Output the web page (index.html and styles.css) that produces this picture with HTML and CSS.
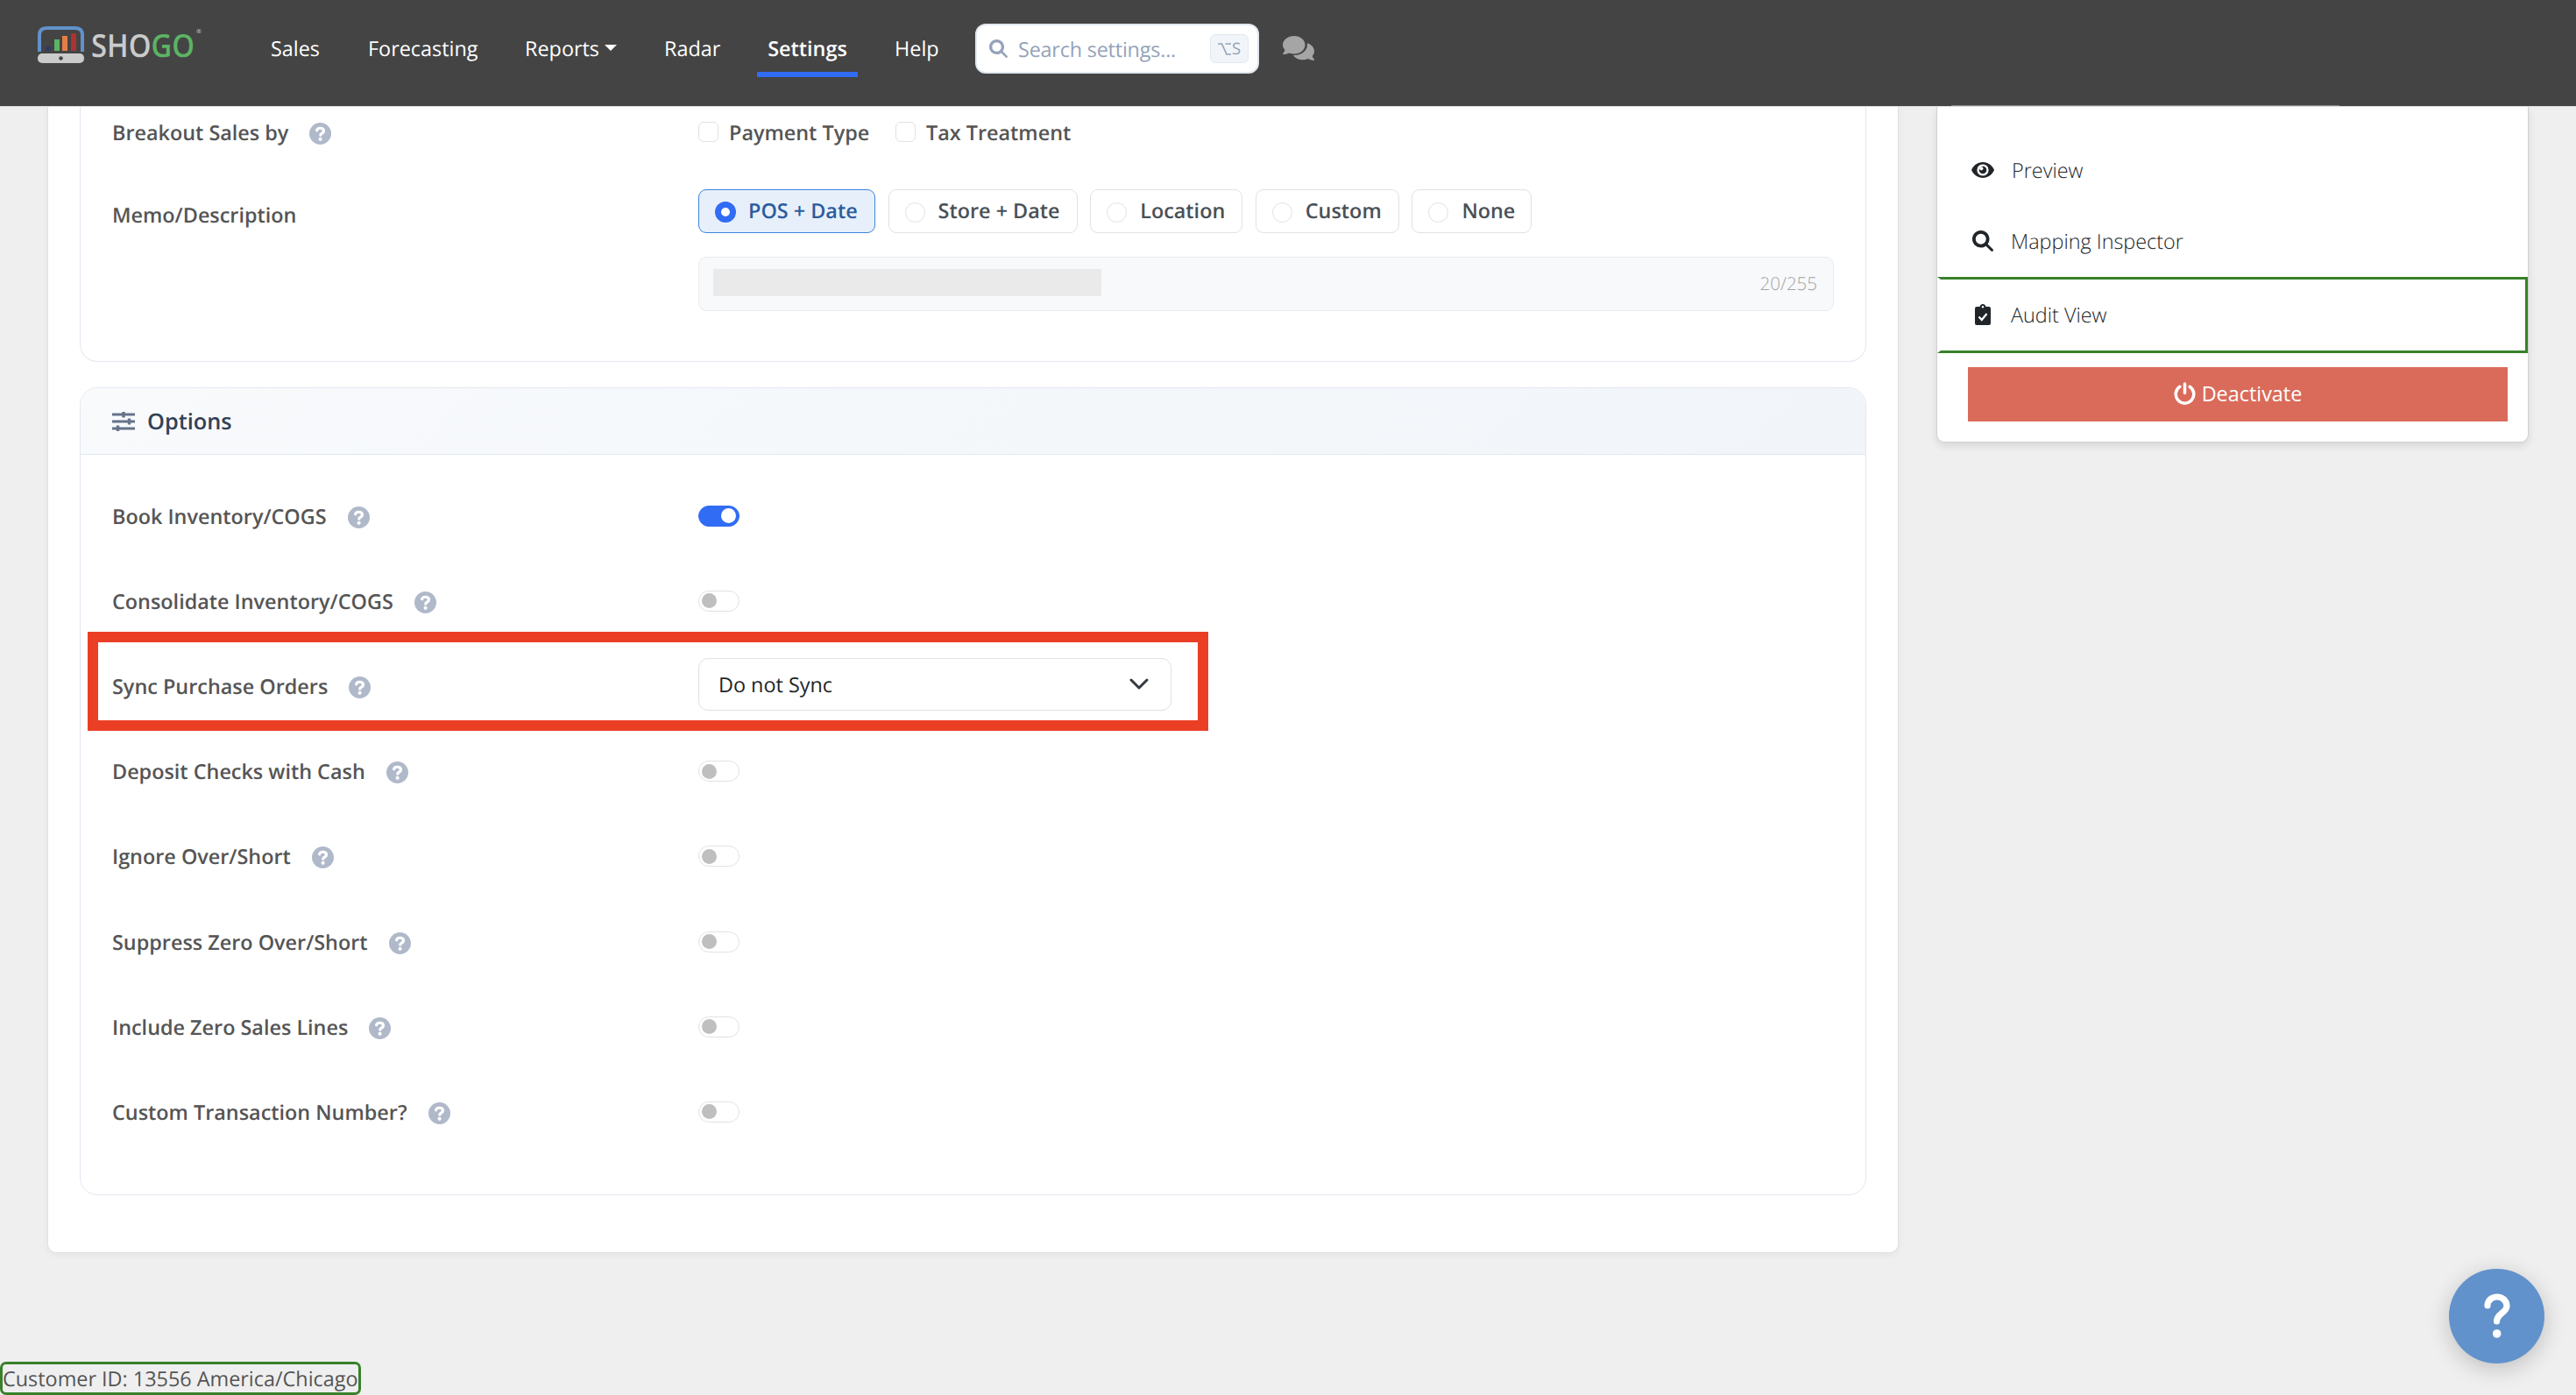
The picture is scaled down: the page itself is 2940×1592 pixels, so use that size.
FILE: index.html
```
<!DOCTYPE html>
<html lang="en">
<head>
    <meta charset="UTF-8">
    <meta name="viewport" content="width=device-width, initial-scale=1.0">
    <title>Shogo - Settings</title>
    <link rel="stylesheet" href="styles.css">
</head>
<body>

<!-- icons used more than once -->
<svg class="sprite">
    <symbol id="i-help" viewBox="0 0 512 512">
        <circle cx="256" cy="256" r="256" fill="#b0b9ca"/>
        <path d="M176 180c8-36 36-52 78-52 50 0 84 26 84 64 0 58-76 52-76 98" fill="none" stroke="#fff" stroke-width="66" stroke-linecap="round"/>
        <circle cx="258" cy="386" r="42" fill="#fff"/>
    </symbol>
    <symbol id="i-search" viewBox="0 0 512 512">
        <path fill="currentColor" d="M416 208c0 45.900-14.900 88.300-40 122.700L502.600 457.400c12.500 12.500 12.500 32.800 0 45.300s-32.800 12.500-45.300 0L330.700 376c-34.400 25.200-76.800 40-122.700 40C93.100 416 0 322.900 0 208S93.100 0 208 0S416 93.100 416 208zM208 336a128 128 0 1 0 0-256 128 128 0 1 0 0 256z"/>
    </symbol>
</svg>

<header class="navbar">
    <a class="logo">
        <svg width="53" height="42" viewBox="0 0 53 42">
            <path d="M2 29V10Q2 2 10 2H43Q51 2 51 10V29" fill="none" stroke="#6192cb" stroke-width="4"/>
            <rect x="9" y="23" width="6" height="5" fill="#2f3a63"/>
            <rect x="19" y="15" width="6" height="13" fill="#5cb364"/>
            <rect x="28" y="11" width="6" height="17" fill="#e67e45"/>
            <rect x="38" y="8" width="6" height="20" fill="#a93432"/>
            <rect x="0" y="31" width="53" height="11" rx="5" fill="#cbcbcb"/>
            <circle cx="26.500" cy="36.500" r="2.300" fill="#444"/>
        </svg>
        <span class="logo_text">SHO<b>GO</b></span><sup>®</sup>
    </a>
    <nav class="menu">
        <a class="n_sales">Sales</a>
        <a class="n_fore">Forecasting</a>
        <a class="n_rep">Reports<i class="caret"></i></a>
        <a class="n_radar">Radar</a>
        <a class="active">Settings</a>
        <a class="n_help">Help</a>
    </nav>
    <div class="search">
        <svg width="21" height="21"><use href="#i-search"/></svg>
        <span>Search settings...</span>
        <kbd><svg width="15" height="14" viewBox="0 0 15 14" fill="none" stroke="currentColor" stroke-width="1.700"><path d="M0 1H4.500L10 13H15M8.500 1H15"/></svg>S</kbd>
    </div>
    <svg class="chat" width="36" height="28" viewBox="0 0 36 28">
        <path fill="#a5a5a5" d="M13 0C20 0 25.500 4.500 25.500 10.300S20 20.500 13 20.500c-2 0-4-.4-5.700-1.100C5.500 20.300 3 21.200.5 21c-.5 0-.7-.7-.3-1.100 1-1 1.900-2.500 2.300-4C.9 14.200 0 12.300 0 10.300 0 4.500 6 0 13 0z"/>
        <path fill="#a5a5a5" d="M28 8.200c4.700 1.300 8 5 8 9.300 0 2-.8 4-2.300 5.600.4 1.500 1.200 2.700 2.200 3.700.4.500.1 1.200-.4 1.200-2.400 0-4.800-.9-6.500-1.900-1.800.8-3.800 1.200-6 1.200-4.800 0-9-2.200-11-5.400 9 .6 16-4.700 16-11.600 0-.7 0-1.400 0-2.100z"/>
    </svg>
    <div class="peek"></div>
</header>

<div class="page">
    <main class="panel">
        <section class="card card_top">
            <div class="row row_breakout">
                <div class="label">Breakout Sales by <svg class="help"><use href="#i-help"/></svg></div>
                <div class="checks">
                    <i class="check"></i><span class="pay">Payment Type</span>
                    <i class="check"></i><span>Tax Treatment</span>
                </div>
            </div>
            <div class="row row_memo">
                <div class="label">Memo/Description</div>
                <div class="memo">
                    <div class="chips">
                        <div class="chip on c1"><i></i>POS + Date</div>
                        <div class="chip c2"><i></i>Store + Date</div>
                        <div class="chip c3"><i></i>Location</div>
                        <div class="chip c4"><i></i>Custom</div>
                        <div class="chip c5"><i></i>None</div>
                    </div>
                    <div class="field"><div class="redacted"></div><span>20/255</span></div>
                </div>
            </div>
        </section>

        <section class="card card_options">
            <h2>
                <svg width="26" height="22" viewBox="0 0 26 22" stroke="#667389" fill="none"><path d="M0 3H26M0 11H26M0 19H26" stroke-width="3"/><path d="M13 0V6.500M19.500 7.500V14.500M6.500 15.500V22" stroke-width="3.400"/></svg>
                Options
            </h2>
            <div class="options">
                <div class="row"><div class="label">Book Inventory/COGS <svg class="help"><use href="#i-help"/></svg></div><i class="toggle on"></i></div>
                <div class="row"><div class="label">Consolidate Inventory/COGS <svg class="help"><use href="#i-help"/></svg></div><i class="toggle"></i></div>
                <div class="row"><div class="label">Sync Purchase Orders <svg class="help"><use href="#i-help"/></svg></div>
                    <div class="select">Do not Sync
                        <svg width="22" height="13" viewBox="0 0 22 13"><path d="M2 2L11 11L20 2" fill="none" stroke="#343a40" stroke-width="3" stroke-linecap="round" stroke-linejoin="round"/></svg>
                    </div>
                    <div class="highlight"></div>
                </div>
                <div class="row"><div class="label">Deposit Checks with Cash <svg class="help"><use href="#i-help"/></svg></div><i class="toggle"></i></div>
                <div class="row"><div class="label">Ignore Over/Short <svg class="help"><use href="#i-help"/></svg></div><i class="toggle"></i></div>
                <div class="row"><div class="label">Suppress Zero Over/Short <svg class="help"><use href="#i-help"/></svg></div><i class="toggle"></i></div>
                <div class="row"><div class="label">Include Zero Sales Lines <svg class="help"><use href="#i-help"/></svg></div><i class="toggle"></i></div>
                <div class="row"><div class="label">Custom Transaction Number? <svg class="help"><use href="#i-help"/></svg></div><i class="toggle"></i></div>
            </div>
        </section>
    </main>

    <aside class="side">
        <a class="item preview">
            <svg width="26" height="18" viewBox="0 0 26 18"><path fill="#212529" d="M13 0C19 0 23.500 3.700 26 9 23.500 14.300 19 18 13 18S2.500 14.300 0 9C2.500 3.700 7 0 13 0z"/><circle cx="13" cy="9" r="6.600" fill="#fff"/><circle cx="13" cy="9" r="4.300" fill="#212529"/><circle cx="11.300" cy="7.300" r="2.100" fill="#fff"/></svg>
            Preview
        </a>
        <a class="item mapping">
            <svg width="24" height="24"><use href="#i-search"/></svg>
            Mapping Inspector
        </a>
        <a class="item audit">
            <svg width="18" height="24" viewBox="0 0 18 24"><path fill="#212529" d="M5.500 3C6 1.200 7.300 0 9 0s3 1.200 3.500 3H16q2 0 2 2.200V22q0 2-2 2H2q-2 0-2-2V5.200Q0 3 2 3z"/><circle cx="9" cy="3.300" r="1.200" fill="#fff"/><path d="M4.500 14.500L7.800 18L13.500 11" fill="none" stroke="#fff" stroke-width="2.200"/></svg>
            Audit View
        </a>
        <button class="deactivate">
            <svg width="25" height="26" viewBox="0 0 25 26" fill="none" stroke="#fff" stroke-width="3.500" stroke-linecap="round"><path d="M12.500 2V12.500M6.800 5.300A10.300 10.300 0 1 0 18.200 5.300"/></svg>
            Deactivate
        </button>
    </aside>
</div>

<div class="customer">Customer ID: 13556 America/Chicago</div>

<div class="help_button">
    <svg width="32" height="52" viewBox="0 0 32 52"><path d="M5 14C5 8 10 4 16 4C22 4 27 8.500 27 14.500C27 22 15.500 23 15.500 32" fill="none" stroke="#fff" stroke-width="7.200" stroke-linecap="round"/><circle cx="15.700" cy="46" r="4.800" fill="#fff"/></svg>
</div>

</body>
</html>
```
FILE: styles.css
```
* {
    box-sizing: border-box;
}

body {
    margin: 0;
    height: 1592px;
    overflow: hidden;
    background: #efefef;
    color: #555;
    font-family: "Open Sans", "Noto Sans", sans-serif;
    font-size: 23.4px;
    line-height: 34px;
    text-rendering: geometricPrecision;
}

svg {
    flex: none;
}

.sprite {
    position: absolute;
    width: 0;
    height: 0;
}

/* Top bar */
.navbar {
    position: relative;
    display: flex;
    align-items: flex-start;
    height: 122px;
    padding-left: 43px;
    background: #444;
    border-bottom: 1px solid #dcdcdc;
    color: #fff;
}

.logo {
    display: flex;
    width: 266px;
    padding-top: 30px;
    color: #cbcbcb;
}

.logo_text {
    width: 120px;
    margin: 5px 0 0 8px;
    font-size: 36px;
    font-weight: 600;
    transform: scaleX(.91);
    transform-origin: left;
}

.logo_text b {
    font-weight: 600;
    color: #5cb364;
}

.logo sup {
    margin-top: 2px;
    font-size: 7px;
    line-height: 10px;
}

.menu {
    display: flex;
    padding-top: 38px;
    width: 804px;
}

.menu a {
    flex: none;
    white-space: nowrap;
    height: 50px;
}

.n_sales { width: 111px; }
.n_fore { width: 179px; }
.n_rep { width: 159px; }
.n_radar { width: 106px; }

.menu .active {
    width: 115px;
    text-align: center;
    font-weight: 600;
    border-bottom: 6px solid #316cf4;
    border-radius: 4px 4px 0 0;
}

.n_help {
    margin-left: 42px;
}

.caret {
    display: inline-block;
    margin-left: 6px;
    vertical-align: 6px;
    border: 7px solid transparent;
    border-top-color: #fff;
    border-bottom: 0;
}

.search {
    display: flex;
    align-items: center;
    width: 324px;
    height: 57px;
    margin-top: 27px;
    padding: 0 10px 0 14px;
    background: #fff;
    border: 2px solid #e2e8f0;
    border-radius: 12px;
    color: #94a3b8;
}

.search span {
    flex: 1;
    margin-left: 12px;
    letter-spacing: -.2px;
    white-space: nowrap;
}

.search kbd {
    display: flex;
    align-items: center;
    justify-content: center;
    gap: 1px;
    width: 44px;
    height: 33px;
    font: 18.5px "Open Sans", sans-serif;
    background: #f1f5f9;
    border: 1px solid #e2e8f0;
    border-radius: 6px;
}

.chat {
    margin: 41px 0 0 27px;
}

/* edge of the side panel showing over the bar */
.peek {
    position: absolute;
    left: 2227px;
    top: 120px;
    width: 443px;
    height: 1px;
    background: #888;
}

/* Page */
.page {
    display: flex;
    align-items: flex-start;
    gap: 43px;
    padding-left: 54px;
}

.panel {
    width: 2113px;
    height: 1308px;
    padding: 0 37px;
    background: #fff;
    border: 1px solid #dee2e6;
    border-top: 0;
    border-radius: 0 0 10px 10px;
    box-shadow: 0 2px 8px rgba(0, 0, 0, .05);
}

.card {
    border: 1px solid #e2e8f0;
    border-radius: 20px;
    width: 2039px;
    margin-left: -1px;
}

.card_top {
    height: 291px;
    border-top: 0;
    border-radius: 0 0 20px 20px;
    padding-left: 36px;
}

.row {
    position: relative;
    display: flex;
    align-items: center;
}

.label {
    display: flex;
    align-items: center;
    width: 669px;
    font-weight: 600;
    white-space: nowrap;
}

.help {
    width: 25px;
    height: 25px;
    margin: 3px 0 0 24px;
}

.row_breakout {
    height: 57px;
}

.checks {
    display: flex;
    align-items: center;
    font-weight: 600;
}

.check {
    width: 23px;
    height: 23px;
    margin-right: 12px;
    border: 1px solid #dee2e6;
    border-radius: 6px;
}

.pay {
    width: 190px;
}

.row_memo {
    align-items: flex-start;
    padding-top: 37px;
}

.row_memo .label {
    padding-top: 12px;
}

.chips {
    display: flex;
    gap: 14.6px;
    color: #495057;
    font-weight: 600;
}

.chip {
    display: flex;
    align-items: center;
    height: 50px;
    padding: 0 0 2px 18px;
    border: 1px solid #dee2e6;
    border-radius: 9px;
    white-space: nowrap;
}

.chip i {
    width: 23px;
    height: 23px;
    margin: 4px 15px 0 0;
    border: 1px solid #dee2e6;
    border-radius: 50%;
}

.chip.on {
    background: #e7f0fa;
    border-color: #3d83db;
    color: #2b5c9e;
}

.chip.on i {
    width: 24px;
    height: 24px;
    margin-right: 14px;
    background: #fff;
    border: 7px solid #316cf4;
}

.c1 { width: 202px; }
.c2 { width: 216px; }
.c3 { width: 174px; }
.c4 { width: 164px; }
.c5 { width: 137px; }

.field {
    display: flex;
    align-items: center;
    justify-content: space-between;
    width: 1296px;
    height: 62px;
    margin-top: 27px;
    padding: 0 18px 0 16px;
    background: #f8f9fb;
    border: 1px solid #e9ecef;
    border-radius: 9px;
    color: #a3a3a3;
    font-size: 20.5px;
    font-weight: 300;
}

.redacted {
    width: 443px;
    height: 31px;
    margin-top: -3px;
    background: #eaeaea;
}

.card_options {
    height: 922px;
    margin-top: 29px;
    overflow: hidden;
}

.card_options h2 {
    display: flex;
    align-items: center;
    gap: 14px;
    height: 76px;
    margin: 0;
    padding: 1px 0 0 36px;
    font-size: 25.3px;
    font-weight: 600;
    color: #334155;
    background: linear-gradient(135deg, #f8fafc 0%, #f1f5f9 100%);
    border-bottom: 1px solid #e2e8f0;
}

.options {
    padding: 21px 0 0 36px;
}

.options .row {
    height: 97.2px;
}

.toggle {
    display: flex;
    align-items: center;
    width: 47px;
    height: 24px;
    padding: 0 3px;
    border: 1px solid #dee2e6;
    border-radius: 12px;
}

.toggle:before {
    content: "";
    width: 17px;
    height: 17px;
    border-radius: 50%;
    background: #bfbfbf;
}

.toggle.on {
    justify-content: flex-end;
    background: #316cf4;
    border-color: #316cf4;
}

.toggle.on:before {
    background: #fff;
}

.select {
    display: flex;
    align-items: center;
    justify-content: space-between;
    width: 540px;
    height: 60px;
    margin-top: -4px;
    padding: 0 25px 0 22px;
    border: 1px solid #dee2e6;
    border-radius: 11px;
    color: #212529;
}

/* red frame laid over the sync row */
.highlight {
    position: absolute;
    left: -28px;
    top: -13px;
    width: 1279px;
    height: 113px;
    border: 12px solid #ea3f25;
}

/* Side panel */
.side {
    width: 676px;
    height: 383px;
    background: #fff;
    border: 1px solid #d0d0d0;
    border-top: 0;
    border-radius: 0 0 9px 9px;
    box-shadow: 0 4px 10px rgba(0, 0, 0, .1);
    color: #212529;
}

.item {
    display: flex;
    align-items: center;
    padding-left: 39px;
    font-weight: 300;
}

.item svg {
    margin-right: 20px;
}

.preview {
    height: 80px;
    margin-top: 32px;
}

.mapping {
    height: 82px;
    padding-left: 40px;
}

.mapping svg {
    margin-right: 20px;
}

.audit {
    height: 87px;
    padding: 0 0 2px 39px;
    border: 3px solid #38812a;
    border-left: 4px solid transparent;
}

.audit svg {
    margin-right: 23px;
}

.deactivate {
    display: flex;
    align-items: center;
    justify-content: center;
    gap: 7px;
    width: 616px;
    height: 62px;
    margin: 16px 0 0 35px;
    padding: 0 0 2px;
    border: 0;
    background: #da6b5a;
    color: #fff;
    font: 23.4px "Open Sans", sans-serif;
}

.customer {
    position: absolute;
    left: 0;
    bottom: 0;
    width: 412px;
    height: 38px;
    border: 3px solid #38812a;
    border-radius: 7px;
    line-height: 32px;
    white-space: nowrap;
}

.help_button {
    position: absolute;
    left: 2795px;
    top: 1448px;
    display: flex;
    align-items: center;
    justify-content: center;
    width: 109px;
    height: 108px;
    border-radius: 50%;
    background: #6192cb;
    box-shadow: 0 6px 26px rgba(0, 0, 0, .2);
}
```
